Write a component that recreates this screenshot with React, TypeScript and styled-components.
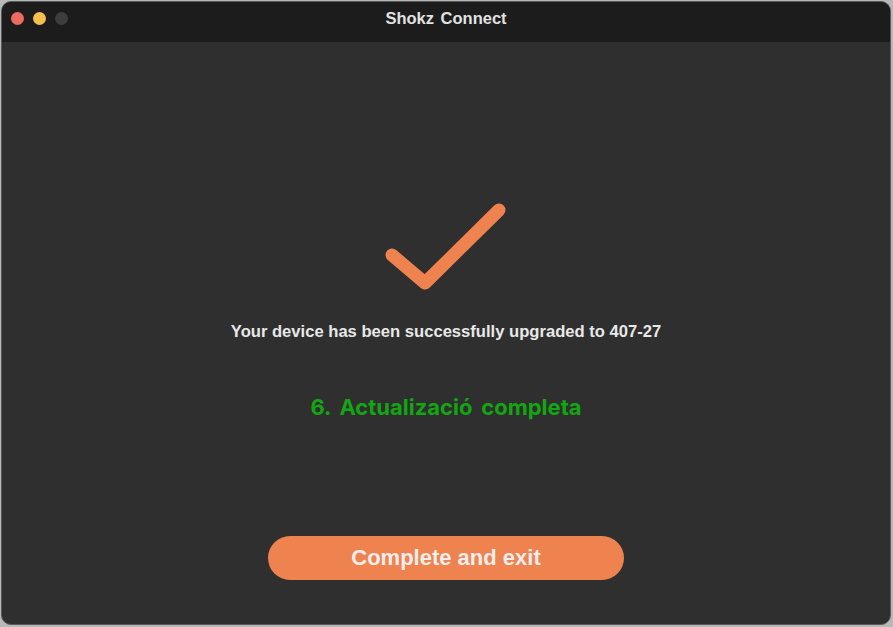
import styled, { createGlobalStyle } from 'styled-components';

const Global = createGlobalStyle`
  html, body {
    margin: 0;
    padding: 0;
    background: #b8b8b8;
    width: 893px;
    height: 627px;
    overflow: hidden;
  }
  #root {
    width: 893px;
    height: 627px;
  }
`;

const Frame = styled.div`
  width: 893px;
  height: 627px;
  padding: 1px 2px 2px 1px;
  box-sizing: border-box;
`;

const Window = styled.div`
  width: 100%;
  height: 100%;
  box-sizing: border-box;
  border: 1px solid #5a5a5a;
  border-radius: 10px;
  overflow: hidden;
  background: #2f2f2f;
  display: flex;
  flex-direction: column;
  font-family: "Liberation Sans", Arial, sans-serif;
`;

const TitleBar = styled.div`
  height: 40px;
  flex-shrink: 0;
  background: #1c1c1c;
  display: flex;
  align-items: center;
  justify-content: center;
  position: relative;
`;

const Lights = styled.div`
  position: absolute;
  left: 9px;
  top: 10px;
  display: flex;
  gap: 9px;
`;

const Light = styled.span<{ $color: string }>`
  width: 13px;
  height: 13px;
  border-radius: 50%;
  background: ${(p) => p.$color};
`;

const Title = styled.div`
  color: #e2e2e2;
  font-size: 16.5px;
  font-weight: 700;
  word-spacing: 2px;
  margin-top: -7px;
`;

const Content = styled.main`
  flex: 1;
  display: flex;
  flex-direction: column;
  align-items: center;
  padding-top: 157px;
`;

const Check = styled.svg`
  display: block;
  width: 130px;
  height: 96px;
`;

const Message = styled.p`
  margin: 27px 0 0;
  color: #e8e8e8;
  font-size: 16.6px;
  line-height: 20px;
  font-weight: 700;
`;

const Step = styled.p`
  margin: 52px 0 0;
  color: #12a612;
  font-family: Inter, "Liberation Sans", sans-serif;
  font-size: 22px;
  line-height: 26px;
  font-weight: 700;
  word-spacing: 3.5px;
`;

const ExitButton = styled.button`
  margin-top: 116px;
  width: 356px;
  height: 44px;
  border: none;
  border-radius: 22px;
  background: #ef834f;
  color: #ededed;
  font-family: "Liberation Sans", Arial, sans-serif;
  font-size: 22px;
  font-weight: 700;
  cursor: pointer;
`;

export default function App() {
  return (
    <>
      <Global />
      <Frame>
        <Window>
          <TitleBar>
            <Lights>
              <Light $color="#ec6a5e" />
              <Light $color="#f4bf4f" />
              <Light $color="#3d3d3d" />
            </Lights>
            <Title>Shokz Connect</Title>
          </TitleBar>
          <Content>
            <Check viewBox="0 0 130 96">
              <polyline
                points="11,56 44,84 118,11"
                fill="none"
                stroke="#ee834f"
                strokeWidth="13"
                strokeLinecap="round"
                strokeLinejoin="round"
              />
            </Check>
            <Message>Your device has been successfully upgraded to 407-27</Message>
            <Step>6. Actualizació completa</Step>
            <ExitButton>Complete and exit</ExitButton>
          </Content>
        </Window>
      </Frame>
    </>
  );
}
